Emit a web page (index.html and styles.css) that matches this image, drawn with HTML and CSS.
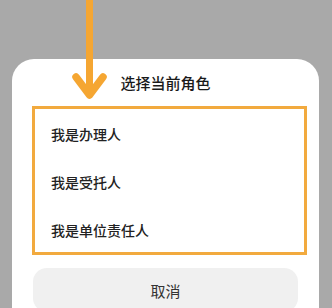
FILE: index.html
```html
<!DOCTYPE html>
<html lang="zh-CN">
<head>
    <meta charset="UTF-8">
    <meta name="viewport" content="width=device-width, initial-scale=1.0">
    <title>选择当前角色</title>
    <link rel="stylesheet" href="styles.css">
</head>
<body>

    <!-- Role picker sheet -->
    <div class="sheet">
        <div class="sheet-title">选择当前角色</div>

        <div class="role-list">
            <div class="role">我是办理人</div>
            <div class="role">我是受托人</div>
            <div class="role">我是单位责任人</div>
        </div>

        <button class="cancel">取消</button>
    </div>

    <!-- Hint arrow drawn over the page -->
    <svg class="hint-arrow" width="48" height="104" viewBox="0 0 48 104">
        <line x1="23.5" y1="-6" x2="23.5" y2="94" stroke="#f5a632" stroke-width="7"/>
        <polyline points="10,77 23.5,95 37,77" fill="none" stroke="#f5a632" stroke-width="7.5" stroke-linecap="round" stroke-linejoin="round"/>
    </svg>

</body>
</html>
```

FILE: styles.css
```css
body {
    margin: 0;
    padding: 0;
    background-color: #a9a9a9;
    font-family: "Noto Sans CJK SC", "Noto Sans", sans-serif;
    height: 308px;
    overflow: hidden;
    position: relative;
}

.sheet {
    margin: 59px 13px 0 12px;
    height: 260px;
    background-color: #fff;
    border-radius: 22px 22px 0 0;
    padding-top: 12px;
    box-sizing: border-box;
}

.sheet-title {
    text-align: center;
    font-size: 15px;
    line-height: 24px;
    font-weight: 500;
    color: #1a1a1a;
}

/* Highlighted list of roles */
.role-list {
    margin: 11px 12px 0 20px;
    border: 3px solid #f2aa3e;
    padding-top: 1px;
    height: 149px;
    box-sizing: border-box;
}

.role {
    height: 48px;
    line-height: 48px;
    padding-left: 16px;
    font-size: 14px;
    font-weight: 500;
    color: #222;
}

.cancel {
    display: block;
    margin: 13px 0 0 21px;
    width: 265px;
    height: 44px;
    border: none;
    border-radius: 14px;
    background-color: #f0f0f0;
    font-family: inherit;
    font-size: 15px;
    color: #333;
    padding: 0;
}

.hint-arrow {
    position: absolute;
    left: 66px;
    top: 0;
}
```
